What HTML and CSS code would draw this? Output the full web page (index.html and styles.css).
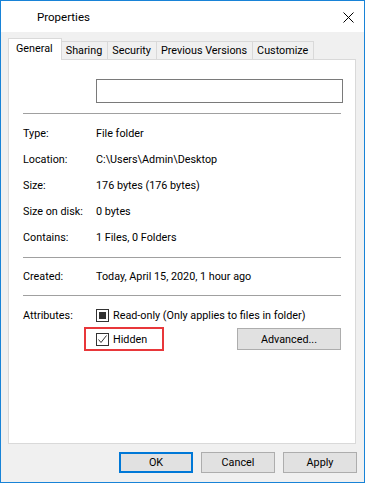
FILE: index.html
```html
<!DOCTYPE html>
<html lang="en">
  <head>
    <meta charset="UTF-8" />
    <title>Properties</title>
    <link rel="stylesheet" href="styles.css">
  </head>
  <body>
    <div class="window">
      <div class="titlebar">
        <span class="title">Properties</span>
        <svg class="close" width="11" height="11" viewBox="0 0 11 11">
          <path d="M0.5 0.5 L10.5 10.5 M10.5 0.5 L0.5 10.5" stroke="#000" stroke-width="1" fill="none" />
        </svg>
      </div>

      <div class="tabs">
        <div class="tab active">General</div>
        <div class="tab">Sharing</div>
        <div class="tab">Security</div>
        <div class="tab">Previous Versions</div>
        <div class="tab">Customize</div>
      </div>

      <div class="panel">
        <div class="name-row">
          <input type="text" class="name-input" />
        </div>
        <hr class="sep first" />

        <div class="row"><span class="label">Type:</span><span>File folder</span></div>
        <div class="row"><span class="label">Location:</span><span>C:\Users\Admin\Desktop</span></div>
        <div class="row"><span class="label">Size:</span><span>176 bytes (176 bytes)</span></div>
        <div class="row"><span class="label">Size on disk:</span><span>0 bytes</span></div>
        <div class="row"><span class="label">Contains:</span><span>1 Files, 0 Folders</span></div>

        <hr class="sep" />
        <div class="row"><span class="label">Created:</span><span>Today, April 15, 2020, 1 hour ago</span></div>
        <hr class="sep last" />

        <div class="attributes">
          <span class="label">Attributes:</span>
          <div class="attr-list">
            <div class="check-line">
              <span class="box mixed"><span class="fill"></span></span>
              <span>Read-only (Only applies to files in folder)</span>
            </div>
            <div class="check-line second">
              <span class="highlight">
                <span class="box">
                  <svg width="11" height="11" viewBox="0 0 11 11">
                    <path d="M1.5 5.5 L4 8.5 L9.5 1.5" stroke="#333" stroke-width="1" fill="none" />
                  </svg>
                </span>
                <span>Hidden</span>
              </span>
              <button class="btn advanced">Advanced...</button>
            </div>
          </div>
        </div>
      </div>

      <div class="actions">
        <button class="btn default">OK</button>
        <button class="btn">Cancel</button>
        <button class="btn">Apply</button>
      </div>
    </div>
  </body>
</html>
```

FILE: styles.css
```css
html {
  box-sizing: border-box;
}

*,
*:before,
*:after {
  box-sizing: inherit;
}

body {
  margin: 0;
  font-family: Roboto, "Liberation Sans", sans-serif;
  font-size: 10.8px;
  color: #000;
}

.window {
  width: 365px;
  height: 483px;
  border: 1px solid #1883d7;
  background: #f0f0f0;
  display: flex;
  flex-direction: column;
}

.titlebar {
  height: 31px;
  background: #fff;
  display: flex;
  align-items: center;
  justify-content: space-between;
  padding: 0 10px 0 36px;
}

.title {
  font-size: 11.5px;
}

.close {
  margin-top: 1px;
}

.tabs {
  display: flex;
  align-items: flex-end;
  padding: 6px 0 0 7px;
  position: relative;
  z-index: 1;
}

.tab {
  height: 18px;
  padding: 0 5px 0 4px;
  border: 1px solid #d9d9d9;
  border-bottom: none;
  margin-left: -1px;
  background: #f0f0f0;
  display: flex;
  align-items: center;
}

.tab.active {
  height: 22px;
  margin-left: 0;
  margin-right: -1px;
  padding: 0 8px 3px 7px;
  background: #fff;
  margin-bottom: -1px;
  position: relative;
  z-index: 2;
}

.tab.active + .tab {
  margin-left: 0;
}

.panel {
  margin: 0 8px 0 7px;
  height: 385px;
  background: #fff;
  border: 1px solid #d9d9d9;
  padding: 19px 14px 0 14px;
}

.name-row {
  padding-left: 73px;
}

.name-input {
  display: block;
  width: 247px;
  height: 24px;
  margin: 0;
  border: 1px solid #7a7a7a;
  padding: 0 4px;
  font: inherit;
}

.sep {
  border: none;
  border-top: 1px solid #a0a0a0;
  margin: 7px 0 5px 0;
  width: 318px;
  height: 0;
}

.sep.first {
  margin: 10px 0 6px 0;
}

.sep.last {
  margin: 6px 0 8px 0;
}

.row {
  display: flex;
  align-items: center;
  height: 26px;
}

.label {
  width: 73px;
  flex-shrink: 0;
}

.attributes {
  display: flex;
}

.attributes .label {
  height: 23px;
  display: flex;
  align-items: center;
}

.attr-list {
  display: flex;
  flex-direction: column;
  flex: 1;
}

.check-line {
  display: flex;
  align-items: center;
  height: 23px;
  gap: 4px;
}

.check-line.second {
  height: 24px;
  justify-content: space-between;
}

.box {
  width: 13px;
  height: 13px;
  border: 1px solid #333;
  background: #fff;
  display: flex;
  align-items: center;
  justify-content: center;
  flex-shrink: 0;
}

.box.mixed .fill {
  width: 7px;
  height: 7px;
  background: #333;
}

.highlight {
  display: flex;
  align-items: center;
  gap: 4px;
  height: 24px;
  margin-left: -12px;
  padding: 0 15px 0 10px;
  border: 2px solid #e8373a;
}

.btn {
  margin: 0;
  height: 21px;
  width: 74px;
  border: 1px solid #adadad;
  background: #e1e1e1;
  font: inherit;
  color: #000;
  padding: 0;
}

.btn.advanced {
  width: 104px;
  height: 22px;
}

.btn.default {
  border: 2px solid #0078d7;
}

.actions {
  display: flex;
  justify-content: flex-end;
  gap: 8px;
  padding: 8px 7px 0 0;
}
```
